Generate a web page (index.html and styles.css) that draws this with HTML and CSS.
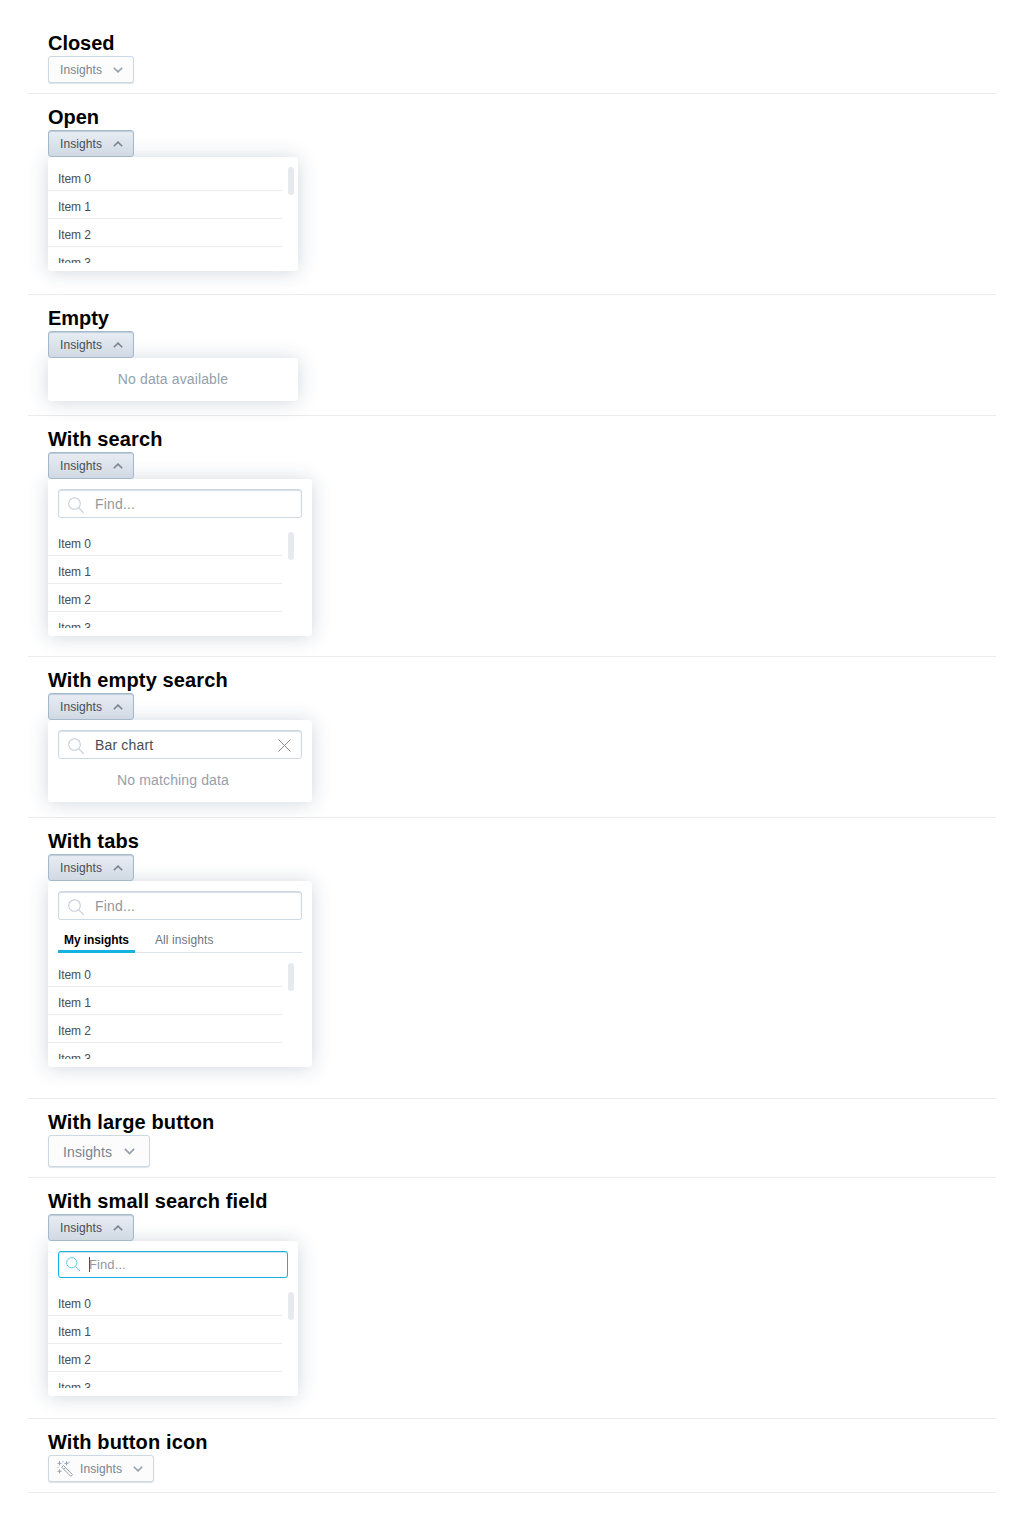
FILE: index.html
```html
<!DOCTYPE html>
<html lang="en">
<head>
<meta charset="utf-8">
<title>Insights dropdown</title>
<link rel="stylesheet" href="styles.css">
</head>
<body>
<svg class="defs" width="0" height="0" aria-hidden="true">
  <symbol id="down" viewBox="0 0 10 6"><path d="M.8.7 5 4.9 9.2.7" fill="none" stroke="currentColor" stroke-width="1.6"/></symbol>
  <symbol id="up" viewBox="0 0 10 6"><path d="M.8 5.3 5 1.1 9.2 5.3" fill="none" stroke="currentColor" stroke-width="1.6"/></symbol>
  <symbol id="search" viewBox="0 0 17 17"><g fill="none" stroke="currentColor" stroke-width="1.1"><circle cx="6.5" cy="6.5" r="5.8"/><path d="m10.600 10.600 5.200 5.200"/></g></symbol>
</svg>
<main>
  <section class="state">
    <h4 class="short">Closed</h4>
    <button class="button"><span>Insights</span><svg class="chevron"><use href="#down"/></svg></button>
  </section>

  <section class="state state-list">
    <h4 class="short">Open</h4>
    <button class="button active"><span>Insights</span><svg class="chevron"><use href="#up"/></svg></button>
    <div class="panel">
      <div class="list"><ul><li>Item 0</li><li>Item 1</li><li>Item 2</li><li>Item 3</li></ul><i class="thumb"></i></div>
    </div>
  </section>

  <section class="state state-empty">
    <h4 class="short">Empty</h4>
    <button class="button active"><span>Insights</span><svg class="chevron"><use href="#up"/></svg></button>
    <div class="panel"><p class="message">No data available</p></div>
  </section>

  <section class="state state-search">
    <h4>With search</h4>
    <button class="button active"><span>Insights</span><svg class="chevron"><use href="#up"/></svg></button>
    <div class="panel wide">
      <div class="field"><svg class="glass"><use href="#search"/></svg><span class="placeholder">Find...</span></div>
      <div class="list"><ul><li>Item 0</li><li>Item 1</li><li>Item 2</li><li>Item 3</li></ul><i class="thumb"></i></div>
    </div>
  </section>

  <section class="state state-nomatch">
    <h4>With empty search</h4>
    <button class="button active"><span>Insights</span><svg class="chevron"><use href="#up"/></svg></button>
    <div class="panel wide">
      <div class="field"><svg class="glass"><use href="#search"/></svg><span>Bar chart</span><svg class="clear" viewBox="0 0 13 13"><path d="m.5.5 12 12m0-12-12 12" fill="none" stroke="currentColor"/></svg></div>
      <p class="message">No matching data</p>
    </div>
  </section>

  <section class="state state-tabs">
    <h4>With tabs</h4>
    <button class="button active"><span>Insights</span><svg class="chevron"><use href="#up"/></svg></button>
    <div class="panel wide">
      <div class="field"><svg class="glass"><use href="#search"/></svg><span class="placeholder">Find...</span></div>
      <div class="tabs"><span class="tab selected">My insights</span><span class="tab">All insights</span></div>
      <div class="list"><ul><li>Item 0</li><li>Item 1</li><li>Item 2</li><li>Item 3</li></ul><i class="thumb"></i></div>
    </div>
  </section>

  <section class="state state-large">
    <h4>With large button</h4>
    <button class="button large"><span>Insights</span><svg class="chevron"><use href="#down"/></svg></button>
  </section>

  <section class="state state-search">
    <h4>With small search field</h4>
    <button class="button active"><span>Insights</span><svg class="chevron"><use href="#up"/></svg></button>
    <div class="panel">
      <div class="field small focused"><svg class="glass"><use href="#search"/></svg><i class="caret"></i><span class="placeholder">Find...</span></div>
      <div class="list"><ul><li>Item 0</li><li>Item 1</li><li>Item 2</li><li>Item 3</li></ul><i class="thumb"></i></div>
    </div>
  </section>

  <section class="state">
    <h4>With button icon</h4>
    <button class="button with-icon">
      <svg class="wand" viewBox="0 0 16 16"><g fill="none" stroke="currentColor"><path d="m4.800 6.200 1.700-1.700 9 9.200-1.700 1.700zM6.700 8.100l1.700-1.700"/><path d="M2.500.3v4M.5 2.300h4M9.500.3v4M7.500 2.300h4M2.500 8.300v4M.5 10.300h4"/><path d="M5.500.8h1M.5 6.300h1M11.500 1.300h1"/></g></svg>
      <span>Insights</span><svg class="chevron"><use href="#down"/></svg>
    </button>
  </section>
</main>
</body>
</html>
```
FILE: styles.css
```css
* { box-sizing: border-box; }
body {
  margin: 0;
  padding: 20px 28px;
  background: #fff;
  color: #464e56;
  font: 12px/16px "Liberation Sans", Arial, sans-serif;
}
.defs { display: block; height: 0; }
main { display: flex; flex-direction: column; }
.state {
  height: 74px;
  padding: 10px 20px;
  border-bottom: 1px solid #ebebeb;
}
.state-list { height: 201px; }
.state-empty { height: 121px; }
.state-search { height: 241px; }
.state-nomatch { height: 161px; }
.state-tabs { height: 281px; }
.state-large { height: 79px; }
h4 {
  height: 26px;
  margin: 0;
  color: #000;
  font-size: 20px;
  line-height: 26px;
  letter-spacing: .13px;
}
h4.short { letter-spacing: -.05px; }
.button {
  position: relative;
  z-index: 1;
  display: flex;
  align-items: center;
  width: 86px;
  height: 27px;
  margin: 0;
  padding: 0 10px 0 11px;
  border: 1px solid #ccd8e2;
  border-radius: 3px;
  background: #fcfcfd;
  box-shadow: 0 1px 1px rgba(20, 56, 93, .15);
  color: #778491;
  font: inherit;
  letter-spacing: .1px;
}
.button.active {
  border-color: #a5b9cd;
  background: linear-gradient(#e9edf4, #d0d9e3);
  box-shadow: inset 0 1px 1px #bccbda;
  color: #464e56;
}
.chevron {
  width: 10px;
  height: 6px;
  margin-left: auto;
  color: #94a1ad;
}
.active .chevron { color: #778491; }
.button.large {
  width: 102px;
  height: 32px;
  padding: 2px 14px 0;
  font-size: 14px;
}
.large .chevron { width: 11px; height: 7px; margin-top: -2px; }
.button.with-icon { width: 106px; padding-left: 8px; }
.wand { width: 16px; height: 16px; margin-right: 7px; color: #94a1ad; }
.panel {
  width: 250px;
  padding: 10px 0 8px;
  border-radius: 3px;
  background: #fff;
  box-shadow: 0 1px 20px rgba(20, 56, 93, .2);
}
.panel.wide { width: 264px; }
.list {
  display: flex;
  justify-content: space-between;
  width: 246px;
  height: 96px;
  overflow: hidden;
}
.field + .list { margin-top: 14px; }
ul { width: 234px; margin: -4px 0 0; padding: 0; list-style: none; }
li { height: 28px; padding: 8px 10px 0; line-height: 16px; border-bottom: 1px solid #ebebeb; letter-spacing: -.08px; }
.thumb { width: 6px; height: 28px; border-radius: 3px; background: #e6eaef; }
.message {
  width: 250px;
  margin: 0;
  padding-top: 2px;
  color: #94a1ad;
  font-size: 14px;
  line-height: 18px;
  letter-spacing: .13px;
  text-align: center;
}
.state-empty .panel { height: 43px; }
.state-nomatch .panel { height: 82px; }
.field + .message { padding-top: 12px; }
.field {
  display: flex;
  align-items: center;
  height: 29px;
  margin: 0 10px;
  padding: 1px 10px 0 9px;
  border: 1px solid #ccd8e2;
  border-radius: 3px;
  box-shadow: inset 0 1px 1px #d5dee7;
  font-size: 14px;
  letter-spacing: .17px;
}
.glass { width: 17px; height: 17px; margin: 2px 10px 0 0; color: #c3cdd7; }
.placeholder { color: #9298a0; }
.clear { width: 13px; height: 13px; margin: 1px 0 0 auto; color: #858d97; }
.field.small {
  height: 27px;
  padding: 0 7px;
  font-size: 13px;
  letter-spacing: .1px;
}
.field.focused { border-color: #14b2e2; }
.small .glass { width: 15px; height: 15px; margin: 0 8px 0 0; color: #5bc6e8; }
.caret { width: 1px; height: 15px; margin-right: -1px; background: #464e56; }
.tabs {
  display: flex;
  gap: 14px;
  height: 33px;
  margin: 0 10px 10px;
  border-bottom: 1px solid #dde4eb;
}
.tab { height: 33px; padding: 12px 6px 0; color: #6d7680; letter-spacing: .1px; }
.tab.selected { width: 77px; border-bottom: 3px solid #14b2e2; color: #000; font-weight: bold; letter-spacing: -.1px; white-space: nowrap; }
```
